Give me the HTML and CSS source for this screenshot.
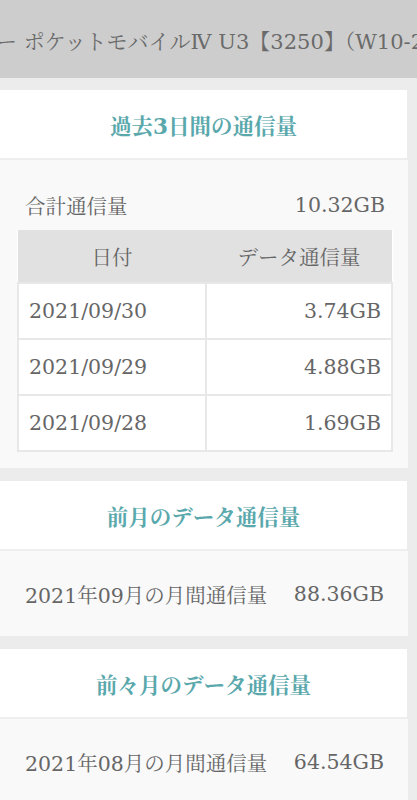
FILE: index.html
```html
<!DOCTYPE html>
<html lang="ja">
<head>
    <meta charset="UTF-8">
    <meta name="viewport" content="width=device-width, initial-scale=1.0">
    <title>データ通信量</title>
    <link rel="stylesheet" href="styles.css">
</head>
<body>
    <header class="topbar">
        <p class="topbar-title">ー ポケットモバイルⅣ U3【3250】（W10-2021）</p>
    </header>

    <section class="card">
        <h2 class="card-title">過去3日間の通信量</h2>
        <div class="card-body">
            <div class="total">
                <span>合計通信量</span>
                <span>10.32GB</span>
            </div>
            <table class="daily">
                <thead>
                    <tr><th>日付</th><th>データ通信量</th></tr>
                </thead>
                <tbody>
                    <tr><td>2021/09/30</td><td class="num">3.74GB</td></tr>
                    <tr><td>2021/09/29</td><td class="num">4.88GB</td></tr>
                    <tr><td>2021/09/28</td><td class="num">1.69GB</td></tr>
                </tbody>
            </table>
        </div>
    </section>

    <section class="card">
        <h2 class="card-title">前月のデータ通信量</h2>
        <div class="card-body month">
            <span>2021年09月の月間通信量</span>
            <span>88.36GB</span>
        </div>
    </section>

    <section class="card">
        <h2 class="card-title">前々月のデータ通信量</h2>
        <div class="card-body month">
            <span>2021年08月の月間通信量</span>
            <span>64.54GB</span>
        </div>
    </section>
</body>
</html>
```

FILE: styles.css
```css
*{
    margin: 0;
    padding: 0;
    box-sizing: border-box;
}
body{
    background: #ececec;
    color: #666;
    font-family: "DejaVu Serif", "Noto Serif CJK JP", "Noto Sans CJK JP", serif;
    font-size: 20.5px;
    overflow: hidden;
}
.topbar{
    height: 78px;
    background: #cdcdcd;
    display: flex;
    align-items: center;
    overflow: hidden;
}
.topbar-title{
    white-space: nowrap;
    font-size: 21px;
    color: #6a6a6a;
    margin-left: -4px;
    padding-top: 2px;
}
.card{
    width: 408px;
    margin-top: 12px;
}
.card + .card{
    margin-top: 13px;
}
.card-title{
    height: 70px;
    background: #fff;
    width: 407px;
    border-bottom: 2px solid #eee;
    display: flex;
    align-items: center;
    justify-content: center;
    font-size: 21.5px;
    font-weight: bold;
    color: #5aa8ac;
}
.card-body{
    background: #f9f9f9;
    padding: 20px 15px 16px 17px;
}
.total{
    height: 50px;
    display: flex;
    align-items: center;
    justify-content: space-between;
    padding: 0 8px;
}
.daily{
    width: 100%;
    border-collapse: collapse;
    table-layout: fixed;
    background: #fff;
}
.daily th{
    height: 53px;
    background: #e1e1e1;
    font-weight: normal;
    text-align: center;
}
.daily td{
    height: 56px;
    border: 2px solid #e8e8e8;
    padding: 0 10px;
}
.daily th:first-child, .daily td:first-child{
    width: 188px;
}
.daily .num{
    text-align: right;
}
.month{
    height: 85px;
    display: flex;
    align-items: center;
    justify-content: space-between;
    padding: 0 24px 0 25px;
}
```
